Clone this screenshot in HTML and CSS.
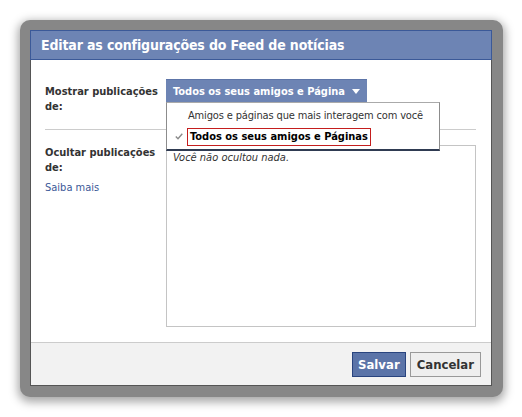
FILE: index.html
```html
<!DOCTYPE html>
<html lang="pt-BR">
<head>
<meta charset="utf-8">
<title>Editar as configurações do Feed de notícias</title>
<link rel="stylesheet" href="styles.css">
</head>
<body>
<div class="frame">
  <div class="dialog">
    <div class="title">Editar as configurações do Feed de notícias</div>
    <div class="content">
      <div class="row row-show">
        <div class="label">Mostrar publicações de:</div>
        <div class="field">
          <div class="dropdown">
            <div class="dd-btn">
              <span>Todos os seus amigos e Página</span>
              <svg class="dd-arrow" width="8" height="5" viewBox="0 0 8 5"><path d="M0 0H8L4 5Z" fill="#fff"/></svg>
            </div>
            <ul class="menu">
              <li class="menu-item">Amigos e páginas que mais interagem com você</li>
              <li class="menu-item selected">
                <svg class="check" width="8" height="7" viewBox="0 0 8 7"><path d="M0.8 3.6L3 5.8L7.3 0.8" fill="none" stroke="#8a8a8a" stroke-width="1.4"/></svg>
                <span class="sel-box">Todos os seus amigos e Páginas</span>
              </li>
            </ul>
          </div>
        </div>
      </div>
      <div class="row row-hide">
        <div class="label">Ocultar publicações de:<a class="learn" href="#">Saiba mais</a></div>
        <div class="field">
          <div class="hidden-box">Você não ocultou nada.</div>
        </div>
      </div>
    </div>
    <div class="footer">
      <button class="btn btn-primary">Salvar</button>
      <button class="btn btn-default">Cancelar</button>
    </div>
  </div>
</div>
</body>
</html>
```

FILE: styles.css
```css
html, body {
  margin: 0;
  padding: 0;
  background: #ffffff;
}
body {
  padding: 20px;
  font-family: "DejaVu Sans Condensed", "DejaVu Sans", sans-serif;
  font-size: 11px;
  color: #333333;
}
.frame {
  width: 462px;
  padding: 10px 11px 11px 10px;
  background: #878787;
  border-radius: 10px;
  box-shadow: 0 3px 10px 2px rgba(0, 0, 0, 0.35);
}
.dialog {
  background: #ffffff;
  border: 1px solid #555555;
  border-top: none;
}
.title {
  height: 28px;
  line-height: 28px;
  background: #6d84b4;
  border: 1px solid #3b5998;
  margin: 0 -1px;
  padding-left: 10px;
  color: #ffffff;
  font-weight: bold;
  font-size: 14px;
  letter-spacing: -0.15px;
}
.content {
  padding: 0 15px 0 14px;
}
.row {
  display: flex;
}
.row-show {
  padding: 19px 0 14px;
  border-bottom: 1px solid #cccccc;
}
.row-hide {
  padding: 15px 0 15px;
}
.label {
  width: 121px;
  flex: none;
  font-weight: bold;
  line-height: 15px;
  color: #333333;
}
.row-show .label {
  margin-top: 5px;
  height: 31px;
}
.learn {
  display: block;
  margin-top: 5px;
  font-weight: normal;
  color: #3b5998;
  text-decoration: none;
}
.field {
  flex: 1;
}
.dropdown {
  position: relative;
}
.dd-btn {
  display: inline-flex;
  align-items: center;
  height: 23px;
  box-sizing: border-box;
  padding: 0 7px 0 7px;
  background: #6d84b4;
  border-top: 1px solid #5d75a8;
  color: #ffffff;
  font-weight: bold;
  gap: 7px;
}
.dd-arrow {
  display: block;
  margin-top: 1px;
}
.menu {
  position: absolute;
  top: 23px;
  left: 0;
  width: 272px;
  margin: 0;
  padding: 3px 0 2px;
  list-style: none;
  background: #ffffff;
  border: 1px solid #8c8c8c;
  border-top: 1px solid #aaaaaa;
  border-bottom: 2px solid #2f3b52;
  z-index: 2;
}
.menu-item {
  position: relative;
  height: 19px;
  line-height: 19px;
  padding-left: 21px;
  color: #333333;
  letter-spacing: -0.15px;
}
.menu-item + .menu-item {
  margin-top: 2px;
}
.selected {
  height: 20px;
}
.check {
  position: absolute;
  left: 8px;
  top: 6px;
}
.sel-box {
  display: inline-block;
  margin-left: -1px;
  height: 16px;
  line-height: 16px;
  padding: 0 2px;
  border: 1px solid #c41e1e;
  color: #000000;
  font-weight: bold;
  letter-spacing: 0;
}
.hidden-box {
  border: 1px solid #c4c4c4;
  padding: 5px 6px;
  box-sizing: border-box;
  height: 182px;
  font-style: italic;
  color: #333333;
  line-height: 14px;
}
.footer {
  display: flex;
  justify-content: flex-end;
  gap: 4px;
  padding: 9px 10px 8px;
  background: #f2f2f2;
  border-top: 1px solid #cccccc;
}
.btn {
  height: 25px;
  box-sizing: border-box;
  padding: 0 5px;
  font-family: "DejaVu Sans Condensed", "DejaVu Sans", sans-serif;
  font-size: 13px;
  font-weight: bold;
  line-height: 23px;
  cursor: pointer;
}
.btn-primary {
  background: #5b74a8;
  border: 1px solid #29447e;
  color: #ffffff;
}
.btn-default {
  background: #eeeeee;
  border: 1px solid #999999;
  color: #333333;
  padding: 0 6px;
}
```
